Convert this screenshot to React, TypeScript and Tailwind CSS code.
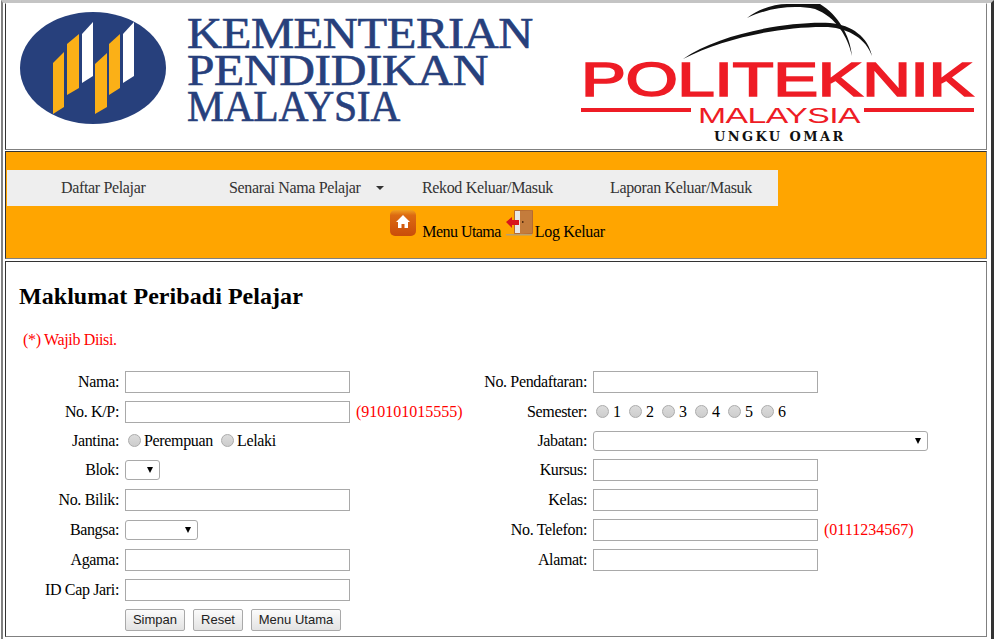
import React from 'react'

const inputCls = 'block h-[22px] w-[225px] border border-[#a9a9a9] bg-white'
const selectCls = 'block h-[20px] appearance-none rounded-[3px] border border-[#a9a9a9] bg-white'
const radioCls =
  'mb-[2px] block h-[13px] w-[13px] shrink-0 appearance-none rounded-full border border-[#ababab] bg-gradient-to-b from-[#dcdcdc] to-[#cdcdcd]'

const KpmLogo = () => (
  <svg width="540" height="146" viewBox="6 3 540 146">
    <ellipse cx="93" cy="67" rx="73" ry="56" fill="#27407c" />
    <polygon points="53,62 64,51 64,106 53,113" fill="#fbb017" />
    <polygon points="67,43 79,33 79,87 67,94" fill="#fbb017" />
    <polygon points="82,33 93,21 93,75 82,82" fill="#fff" />
    <polygon points="95,63 107,52 107,106 95,113" fill="#fbb017" />
    <polygon points="109,43 120,33 120,87 109,94" fill="#fbb017" />
    <polygon points="123,33 134,21 134,75 123,82" fill="#fff" />
    <g fill="#27407c" stroke="#27407c" strokeWidth="0.6" fontFamily="'Liberation Serif', serif" fontSize="44">
      <text x="187" y="47" textLength="346" lengthAdjust="spacingAndGlyphs">KEMENTERIAN</text>
      <text x="187" y="84" textLength="301" lengthAdjust="spacingAndGlyphs">PENDIDIKAN</text>
      <text x="187" y="120" textLength="213" lengthAdjust="spacingAndGlyphs">MALAYSIA</text>
    </g>
  </svg>
)

const PolyLogo = () => (
  <svg width="414" height="146" viewBox="572 3 414 146">
    <path d="M683 58 C720 32 790 20 830 22 C852 24 868 36 872 55 C866 38 850 28 828 26 C785 25 725 36 683 58 Z" fill="#111" />
    <path d="M747 17 C760 7 775 3 787 3 L820 3 C838 14 850 34 852 55 C848 36 836 16 815 8 C795 4 770 6 747 17 Z" fill="#111" />
    <text
      x="581"
      y="95"
      fill="#ee1c25"
      stroke="#ee1c25"
      strokeWidth="1.6"
      fontFamily="'Liberation Sans', sans-serif"
      fontSize="48"
      textLength="392"
      lengthAdjust="spacingAndGlyphs"
    >
      POLITEKNIK
    </text>
    <rect x="581" y="107" width="110" height="4" fill="#ee1c25" />
    <rect x="864" y="107" width="110" height="4" fill="#ee1c25" />
    <text
      x="698"
      y="122"
      fill="#ee1c25"
      fontFamily="'Liberation Sans', sans-serif"
      fontSize="22"
      textLength="162"
      lengthAdjust="spacingAndGlyphs"
    >
      MALAYSIA
    </text>
    <text
      x="714"
      y="140"
      fill="#111"
      fontFamily="'DejaVu Serif', serif"
      fontWeight="700"
      fontSize="13"
      textLength="129"
      lengthAdjust="spacing"
    >
      UNGKU OMAR
    </text>
  </svg>
)

const HomeIcon = () => (
  <svg width="26" height="26" viewBox="0 0 26 26" className="shrink-0">
    <defs>
      <linearGradient id="homeBg" x1="0" y1="0" x2="0" y2="1">
        <stop offset="0" stopColor="#f0a020" />
        <stop offset="0.2" stopColor="#dc6a12" />
        <stop offset="1" stopColor="#c94c0a" />
      </linearGradient>
    </defs>
    <rect x="0" y="0" width="26" height="26" rx="5" fill="url(#homeBg)" />
    <path d="M13 5 L20 12 H18 V18 H14.5 V14 H11.5 V18 H8 V12 H6 Z" fill="#fff" />
  </svg>
)

const DoorIcon = () => (
  <svg width="28" height="27" viewBox="0 0 28 27" className="shrink-0">
    <rect x="0" y="25" width="26" height="1.5" fill="#b8a070" />
    <rect x="8" y="1" width="19" height="24" rx="1" fill="#b56a30" />
    <rect x="9" y="2" width="6" height="22" fill="#e8e8e8" />
    <polygon points="14,2 26,1.5 26,24 14,25" fill="#c47c3c" />
    <rect x="16" y="12" width="1.5" height="2" fill="#5a3010" />
    <polygon points="0,13 6,8 6,11 13,11 13,16 6,16 6,19" fill="#d8141c" />
  </svg>
)

const Arrow = () => (
  <span className="absolute right-[7px] top-[7px] h-0 w-0 border-x-[3px] border-t-[6px] border-x-transparent border-t-black" />
)

const Select = ({ w }: { w: string }) => (
  <div className={`relative ${w}`}>
    <select className={`${selectCls} w-full`} />
    <Arrow />
  </div>
)

const Radio = ({ label, cls }: { label: string; cls: string }) => (
  <label className={`flex items-center ${cls}`}>
    <input type="radio" className={radioCls} />
    <span>{label}</span>
  </label>
)

const Row = ({
  h = 'h-[30px]',
  left,
  leftField,
  right,
  rightField,
}: {
  h?: string
  left: string
  leftField: React.ReactNode
  right?: string
  rightField?: React.ReactNode
}) => (
  <div className={`grid grid-cols-[113px_359px_109px_1fr] items-center ${h}`}>
    <div className="text-right">{left}</div>
    <div className="pl-[6px]">{leftField}</div>
    <div className="text-right">{right}</div>
    <div className="pl-[6px]">{rightField}</div>
  </div>
)

const btnCls =
  "h-[22px] rounded-[2px] border border-[#a9a9a9] bg-gradient-to-b from-[#fbfbfb] to-[#e3e3e3] font-['Liberation_Sans',sans-serif] text-[13px] tracking-normal text-[#222]"

export default function App() {
  return (
    <div className="h-[639px] w-[994px] overflow-hidden bg-white pl-px font-['Liberation_Serif',serif] text-[16px] tracking-[-0.35px] text-black">
      <div className="h-[639px] border-l-2 border-r-[3px] border-t-[3px] border-l-[#808080] border-r-[#333] border-t-[#c4c4c4] pl-[2px] pr-[4px]">
        <div className="flex h-[147px] justify-between overflow-hidden border border-b-[#808080] border-l-[#333] border-r-[#808080] border-t-transparent">
          <KpmLogo />
          <PolyLogo />
        </div>

        <div className="mt-px h-[108px] border border-b-[#808080] border-l-[#333] border-r-[#808080] border-t-[#333] bg-[#ffa500] pt-[18px]">
          <nav className="ml-px flex h-[36px] w-[771px] items-center bg-[#eee] text-[#333]">
            <a className="w-[192px] pl-[54px]">Daftar Pelajar</a>
            <a className="flex w-[195px] items-center pl-[30px]">
              Senarai Nama Pelajar
              <span className="ml-[15px] h-0 w-0 border-x-[4px] border-t-[4px] border-x-transparent border-t-[#333]" />
            </a>
            <a className="w-[188px] pl-[28px]">Rekod Keluar/Masuk</a>
            <a className="pl-[28px]">Laporan Keluar/Masuk</a>
          </nav>
          <div className="flex items-end justify-center pl-[3px] pt-[3px]">
            <HomeIcon />
            <a className="-mb-[8px] ml-[6px] mr-[5px] tracking-[-0.55px]">Menu Utama</a>
            <DoorIcon />
            <a className="-mb-[8px] ml-px">Log Keluar</a>
          </div>
        </div>

        <div className="mt-[2px] h-[376px] border border-b-[#808080] border-l-[#333] border-r-[#808080] border-t-[#333]">
          <h2 className="pl-[13px] pt-[20px] text-[24px] font-bold leading-[28px] tracking-[0.05px]">Maklumat Peribadi Pelajar</h2>
          <p className="pl-[17px] pt-[21px] leading-[18px] text-[#f00]">(*) Wajib Diisi.</p>
          <div className="pt-[18px]">
            <Row
              left="Nama:"
              leftField={<input className={inputCls} />}
              right="No. Pendaftaran:"
              rightField={<input className={inputCls} />}
            />
            <Row
              left="No. K/P:"
              leftField={
                <div className="flex items-center gap-[6px]">
                  <input className={inputCls} />
                  <span className="tracking-normal text-[#f00]">(910101015555)</span>
                </div>
              }
              right="Semester:"
              rightField={
                <div className="flex items-center pl-[3px] tracking-normal">
                  {['1', '2', '3', '4', '5', '6'].map((s) => (
                    <Radio key={s} label={s} cls="w-[33px] gap-[4px]" />
                  ))}
                </div>
              }
            />
            <Row
              h="h-[28px]"
              left="Jantina:"
              leftField={
                <div className="flex items-center pl-[3px]">
                  <Radio label="Perempuan" cls="w-[93px] gap-[3px]" />
                  <Radio label="Lelaki" cls="gap-[3px]" />
                </div>
              }
              right="Jabatan:"
              rightField={<Select w="w-[335px]" />}
            />
            <Row
              left="Blok:"
              leftField={<Select w="w-[35px]" />}
              right="Kursus:"
              rightField={<input className={inputCls} />}
            />
            <Row
              left="No. Bilik:"
              leftField={<input className={inputCls} />}
              right="Kelas:"
              rightField={<input className={inputCls} />}
            />
            <Row
              left="Bangsa:"
              leftField={<Select w="w-[73px]" />}
              right="No. Telefon:"
              rightField={
                <div className="flex items-center gap-[6px]">
                  <input className={inputCls} />
                  <span className="tracking-normal text-[#f00]">(0111234567)</span>
                </div>
              }
            />
            <Row
              left="Agama:"
              leftField={<input className={inputCls} />}
              right="Alamat:"
              rightField={<input className={inputCls} />}
            />
            <Row left="ID Cap Jari:" leftField={<input className={inputCls} />} />
            <Row
              left=""
              leftField={
                <div className="flex gap-[8px]">
                  <button className={`${btnCls} w-[60px]`}>Simpan</button>
                  <button className={`${btnCls} w-[50px]`}>Reset</button>
                  <button className={`${btnCls} w-[90px]`}>Menu Utama</button>
                </div>
              }
            />
          </div>
        </div>
      </div>
    </div>
  )
}
